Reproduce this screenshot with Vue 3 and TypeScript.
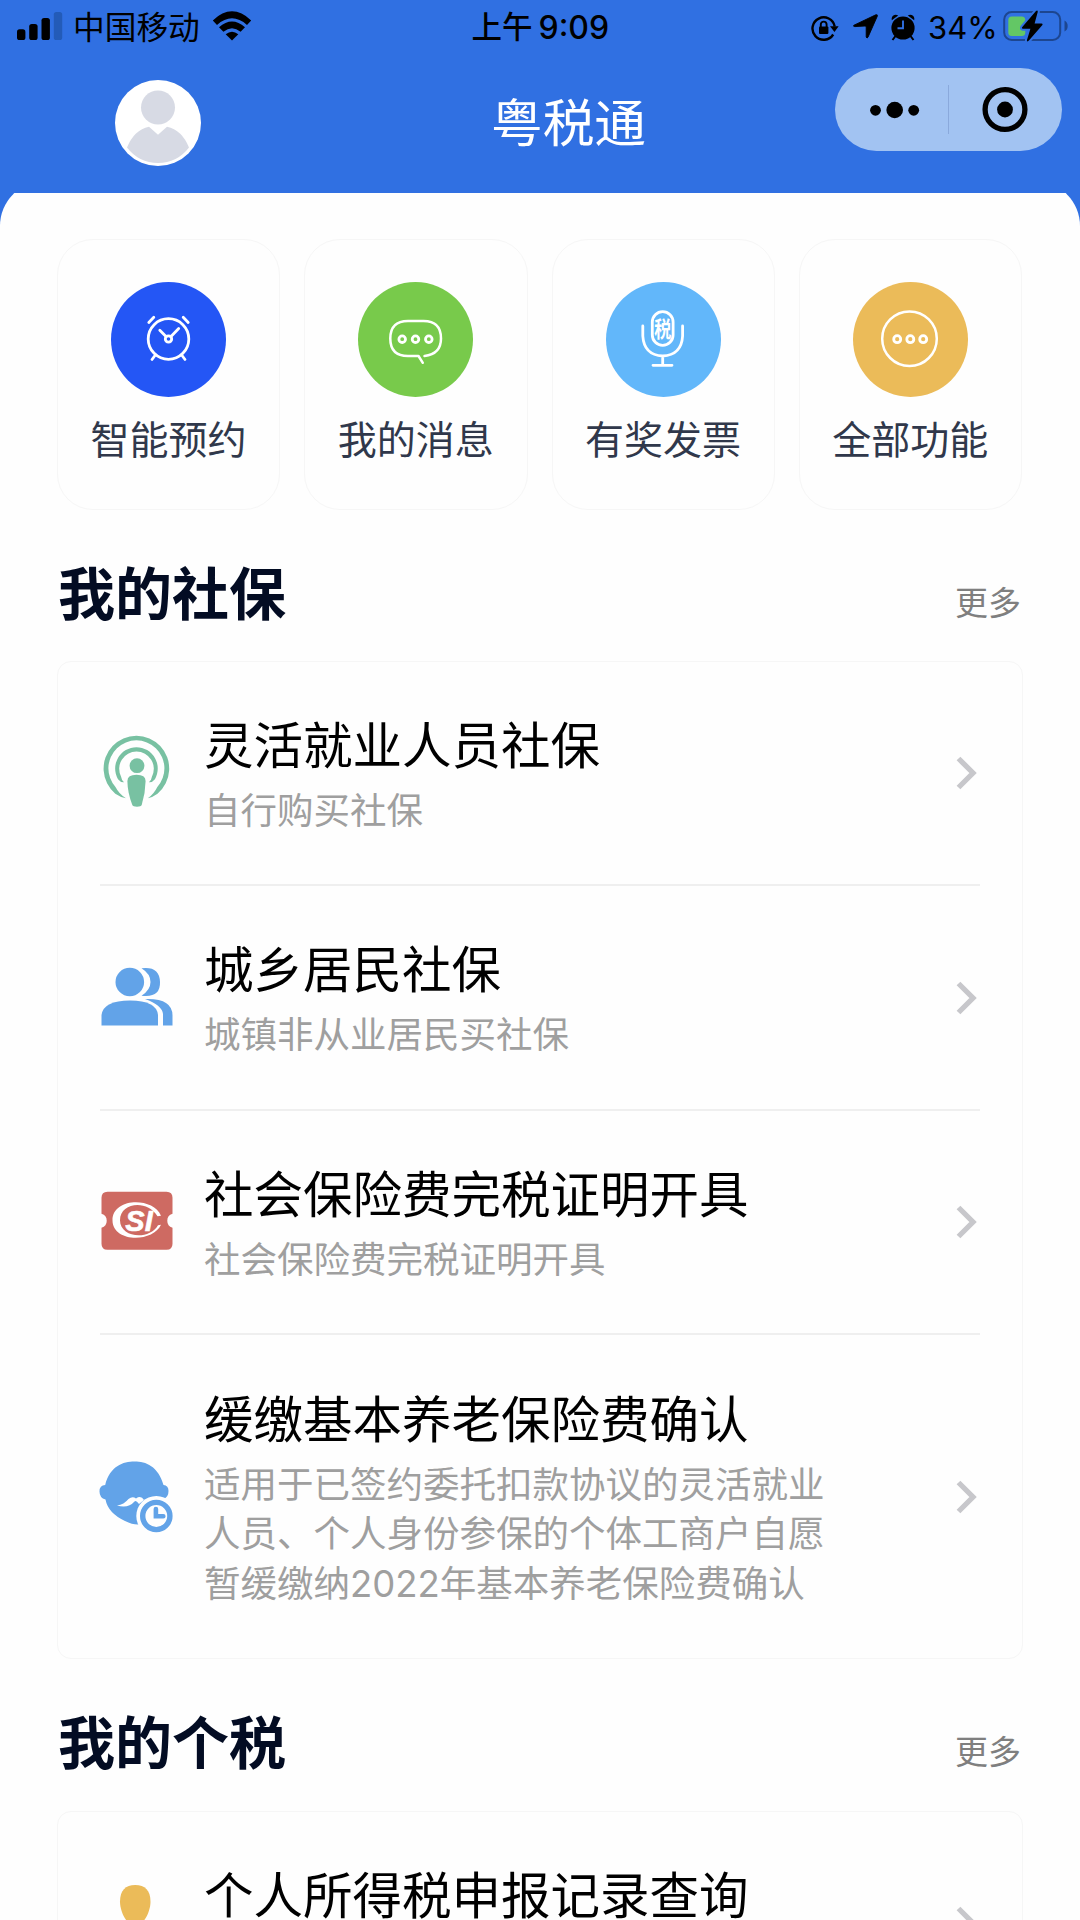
<script setup lang="ts">
type IconName = 'podcast' | 'people' | 'ticket' | 'elder' | 'bulb'

interface Shortcut {
  key: 'alarm' | 'message' | 'mic' | 'all'
  label: string
}

interface Service {
  icon: IconName
  title: string
  desc: string[]
}

interface Section {
  title: string
  items: Service[]
}

const shortcuts: Shortcut[] = [
  { key: 'alarm', label: '智能预约' },
  { key: 'message', label: '我的消息' },
  { key: 'mic', label: '有奖发票' },
  { key: 'all', label: '全部功能' },
]

const sections: Section[] = [
  {
    title: '我的社保',
    items: [
      { icon: 'podcast', title: '灵活就业人员社保', desc: ['自行购买社保'] },
      { icon: 'people', title: '城乡居民社保', desc: ['城镇非从业居民买社保'] },
      { icon: 'ticket', title: '社会保险费完税证明开具', desc: ['社会保险费完税证明开具'] },
      {
        icon: 'elder',
        title: '缓缴基本养老保险费确认',
        desc: [
          '适用于已签约委托扣款协议的灵活就业',
          '人员、个人身份参保的个体工商户自愿',
          '暂缓缴纳2022年基本养老保险费确认',
        ],
      },
    ],
  },
  {
    title: '我的个税',
    items: [{ icon: 'bulb', title: '个人所得税申报记录查询', desc: [''] }],
  },
]
</script>

<template>
  <div class="screen">
    <header class="header">
      <div class="status">
        <div class="status-left">
          <svg class="signal" width="46" height="28" viewBox="0 0 46 28">
            <rect x="0" y="17.3" width="8.4" height="10.7" rx="2.6" />
            <rect x="12.2" y="12" width="8.4" height="16" rx="2.6" />
            <rect x="24.5" y="6" width="8.4" height="22" rx="2.6" />
            <rect x="36.8" y="0" width="8.4" height="28" rx="2.6" fill="#235bb8" />
          </svg>
          <span class="carrier">中国移动</span>
          <svg class="wifi" width="40" height="30" viewBox="0 0 40 30">
            <path d="M0.8 9.4Q20 -8.8 39.2 9.4L35 13.9Q20 0.8 5 13.9Z" />
            <path d="M7 16.3Q20 4.6 33 16.3L28.6 20.8Q20 13.6 11.4 20.8Z" />
            <path d="M13.7 23.3Q20 18 26.3 23.3L20 29.6Z" />
          </svg>
        </div>
        <div class="clock"><span class="clock-cn">上午</span><span class="clock-num">9:09</span></div>
        <div class="status-right">
          <svg width="28" height="28" viewBox="0 0 28 28">
            <path d="M22.2 20.5A11.2 11.2 0 1 1 23.7 12.5" fill="none" stroke="#000" stroke-width="2.4" />
            <path d="M19 12.2h8.6L23.5 18Z" />
            <rect x="8" y="12.4" width="9.4" height="7.6" rx="1" />
            <path d="M9.8 13v-2.5a2.9 2.9 0 0 1 5.8 0V13" fill="none" stroke="#000" stroke-width="1.9" />
          </svg>
          <svg class="arrow" width="25" height="25" viewBox="0 0 25 25">
            <path d="M1 11.2 22.8 0.8Q24.8 0.2 24.3 2.2L15 23.2Q14 25 13.2 23V12.8Q13 12 12 12L1.8 12.6Q-.4 12.2 1 11.2Z" stroke="#000" stroke-width=".9" />
          </svg>
          <svg class="bell" width="24" height="27" viewBox="0 0 24 27">
            <circle cx="12" cy="14" r="11.6" />
            <path d="M.8 6.2Q0 2 3.4 .9Q5.5 .3 7.2 1.6ZM23.2 6.2Q24 2 20.6 .9Q18.5 .3 16.8 1.6Z" />
            <path d="m4.5 22-3 4M19.5 22l3 4" stroke="#000" stroke-width="2" />
            <path d="M12 6.5V14.2H6.5" fill="none" stroke="#3070e2" stroke-width="1.9" />
          </svg>
          <span class="percent">34%</span>
          <svg class="battery" width="65" height="32" viewBox="0 0 65 32">
            <rect x="1.2" y="2" width="56" height="28" rx="7.5" fill="none" stroke="#1d4690" stroke-width="2" />
            <path d="M61.5 10.5q3.2 1.5 3.2 5.5t-3.2 5.5Z" fill="#1d4690" />
            <rect x="5.3" y="6.5" width="17" height="19.5" rx="3.5" fill="#63c765" />
            <path d="M33 1 19.3 17q-1 1.5.7 1.7h7.4L23.9 30.2q.3 2.2 2 .4L39.2 15.3q1-1.5-.7-1.8H31.6L34.8 1.8Q34.6-.4 33 1Z" stroke="#3070e2" stroke-width="4" />
            <path d="M33 1 19.3 17q-1 1.5.7 1.7h7.4L23.9 30.2q.3 2.2 2 .4L39.2 15.3q1-1.5-.7-1.8H31.6L34.8 1.8Q34.6-.4 33 1Z" />
          </svg>
        </div>
      </div>
      <div class="nav">
        <svg class="avatar" width="86" height="86" viewBox="0 0 86 86">
          <circle cx="43" cy="43" r="43" fill="#fff" />
          <circle cx="43" cy="27.5" r="17" fill="#d7dae4" />
          <path d="M12 67.5Q19 50 34 46.7L43 54.7 52 46.7Q67 50 74 67.5Q62 83 43 83T12 67.5Z" fill="#d7dae4" />
        </svg>
        <h1 class="brand">粤税通</h1>
        <div class="capsule">
          <svg width="227" height="83" viewBox="0 0 227 83">
            <circle cx="40.5" cy="42.3" r="5.4" />
            <circle cx="59.7" cy="42" r="8.3" />
            <circle cx="78.7" cy="42.3" r="5.4" />
            <path d="M113.5 17v49" stroke="#8aa9dc" stroke-width="1" />
            <circle cx="170" cy="41.5" r="19.9" fill="none" stroke="#000" stroke-width="5.3" />
            <circle cx="170" cy="41.5" r="7.9" />
          </svg>
        </div>
      </div>
    </header>

    <div class="clip">
      <main class="panel">
        <nav class="shortcuts">
          <div v-for="s in shortcuts" :key="s.key" class="tile">
            <div class="disc" :class="s.key">
              <svg width="115" height="115" viewBox="0 0 115 115" fill="none" stroke="#fff" stroke-width="2.8" stroke-linecap="round" stroke-linejoin="round">
                <template v-if="s.key === 'alarm'">
                  <circle cx="57.5" cy="57" r="20.3" />
                  <circle cx="57.5" cy="57" r="3.2" />
                  <path d="M55 54.5 48.8 48.3M60 54.5 67.7 46.5M37.8 40.5l5-5.3M77.2 40.5l-5-5.3M44 73.5l-3 4M71 73.5l3 4" />
                </template>
                <template v-else-if="s.key === 'message'">
                  <path d="M66.500 74Q83 72 83 56.500Q83 39 65.500 39H50Q32.300 39 32.300 56.500T50 74H60.500L64.800 80.800" stroke-width="2.500" />
                  <circle cx="44.200" cy="57.200" r="3.300" />
                  <circle cx="57.500" cy="57.200" r="3.300" />
                  <circle cx="70.800" cy="57.200" r="3.300" />
                </template>
                <template v-else-if="s.key === 'mic'">
                  <rect x="46.300" y="29.700" width="20.800" height="33.600" rx="10.400" />
                  <path d="M36.800 44V54Q38 73 56.700 74Q75.500 73 76.600 54V44M56.700 74.500V83M47 83.300H66" />
                  <text class="tax" text-anchor="middle" fill="#fff" stroke="none" transform="translate(56.700 55) scale(1 1.280)">税</text>
                </template>
                <template v-else>
                  <circle cx="56.500" cy="56.700" r="27.300" stroke-width="2.500" />
                  <circle cx="44.200" cy="57.200" r="3.500" />
                  <circle cx="57.300" cy="57.200" r="3.500" />
                  <circle cx="70.200" cy="57.200" r="3.500" />
                </template>
              </svg>
            </div>
            <span class="tile-label">{{ s.label }}</span>
          </div>
        </nav>

        <section v-for="sec in sections" :key="sec.title" class="section">
          <div class="section-head">
            <h2>{{ sec.title }}</h2>
            <span class="more">更多</span>
          </div>
          <div class="card">
            <div v-for="item in sec.items" :key="item.title" class="row">
              <svg class="row-icon" width="80" height="80" viewBox="0 0 80 80">
                <g v-if="item.icon === 'podcast'" fill="#78c1a2">
                  <path d="M29 65.300Q23 64 18.300 60.700A32.800 32.800 0 1 1 60.500 60.700Q56 64 50.800 65.300Q57 61 60.300 54A28 28 0 1 0 18.500 54Q22 61 29 65.300Z" />
                  <path d="M27 49.300Q23.500 49.500 21 46.200A21.300 21.300 0 1 1 57.900 46.200Q55.500 49.500 51.900 49.300Q54.500 47 55 43.500A17.300 17.300 0 1 0 24 43.500Q24.500 47 27 49.300Z" />
                  <circle cx="40" cy="32.700" r="7.400" />
                  <path d="M30.400 48Q30.400 41.700 39.500 41.700T48.600 48Q48.400 60 44.700 72Q44 73.700 40 73.700T35.300 72Q30.600 60 30.400 48Z" />
                </g>
                <g v-else-if="item.icon === 'people'" fill="#62a3e8" transform="translate(0 -2)">
                  <circle cx="32.800" cy="26" r="14.300" />
                  <path d="M44.500 12.300Q62.500 10 63 26T44.500 39.700Q53.500 34 53.500 26T44.500 12.300Z" />
                  <path d="M4.500 69.500V59Q6.500 44.500 33 44.500T61 59V69.500Z" />
                  <path d="M48 43Q75.500 42 75.500 59.500V69.500H66V58Q65 49 48 43Z" />
                </g>
                <g v-else-if="item.icon === 'ticket'" transform="translate(0 -1.300)">
                  <path d="M10.500 11H69.500Q75.500 11 75.500 17V33A7.300 7.300 0 0 0 75.500 47V63Q75.500 69 69.500 69H10.500Q4.500 69 4.500 63V47A7.300 7.300 0 0 0 4.500 33V17Q4.500 11 10.500 11Z" fill="#ce6a62" />
                  <path d="M64 35C56 16 15.500 17 15.500 39.500S56 62 64 44L61 44.500C52 60 23 57 23 39.500S50 18.500 60.500 35.500Z" fill="#fff" />
                  <text class="si" x="42" y="50.300" text-anchor="middle" fill="#fff" stroke="#fff" stroke-width=".6">SI</text>
                </g>
                <g v-else-if="item.icon === 'elder'" fill="#62a3e8">
                  <path d="M8.200 28C13 9 26 4.500 37.500 4.500S61 9 66.500 28Q71.500 28.500 71.500 34T67 42L45 67Q38 69 28 64Q11 56 8.500 42.500Q2.500 41 2.500 34.500T8.200 28Z" />
                  <path d="M20 48.500Q27 47.500 31.500 42Q35.500 39 39 41.500Q44 38 47 43L42 47Q39 43 37.500 44.500Q31 52 20 48.500Z" fill="#fff" />
                  <circle cx="59.300" cy="59" r="20" fill="#fefefe" />
                  <circle cx="59.300" cy="59" r="13.600" fill="none" stroke="#62a3e8" stroke-width="5.400" />
                  <path d="M58.900 52V59.300H66.300" fill="none" stroke="#62a3e8" stroke-width="4.600" stroke-linecap="round" />
                </g>
                <g v-else fill="#ebbb59">
                  <path d="M38.200 2C48 2 53.500 7.500 53.500 18.500S46 43 38.200 43S23 29.500 23 18.500S28.500 2 38.200 2Z" />
                  <path d="M4 72Q6 48 38.500 48T73 72Z" />
                </g>
              </svg>
              <div class="row-text">
                <div class="row-title">{{ item.title }}</div>
                <div v-for="line in item.desc" :key="line" class="row-desc">{{ line }}</div>
              </div>
              <svg class="chevron" width="22" height="36" viewBox="0 0 22 36">
                <path d="M2.500 3.500 17 18 2.500 32.500" fill="none" stroke="#c7c7cb" stroke-width="5.300" />
              </svg>
            </div>
          </div>
        </section>
      </main>
    </div>
  </div>
</template>

<style>
body {
  margin: 0;
  overflow: hidden;
}
</style>

<style scoped>
.screen {
  width: 1080px;
  height: 1920px;
  overflow: hidden;
  background: #3070e2;
  font-family: "Noto Sans CJK SC", sans-serif;
  color: #000;
}
svg {
  display: block;
  flex: none;
}
.header {
  height: 193px;
}
.status {
  display: flex;
  justify-content: space-between;
  height: 54px;
  padding: 0 12px 0 17px;
  box-sizing: border-box;
}
.status-left,
.status-right {
  display: flex;
  width: 452px;
}
.signal {
  margin-top: 12px;
}
.carrier {
  margin-left: 10px;
  font-size: 31.7px;
  line-height: 50px;
  width: 127px;
  white-space: nowrap;
}
.wifi {
  margin: 11px 0 0 11.5px;
}
.clock {
  display: flex;
  width: 142px;
  line-height: 50px;
  font-size: 30.5px;
  font-weight: 500;
  white-space: nowrap;
}
.clock-num {
  margin-left: 6px;
  font-family: Inter, sans-serif;
  font-size: 32px;
  line-height: 55px;
}
.status-right {
  justify-content: flex-end;
}
.status-right > svg:first-child {
  margin-top: 14px;
}
.arrow {
  margin: 14px 0 0 14px;
}
.bell {
  margin: 14px 0 0 13px;
}
.percent {
  margin-left: 13px;
  width: 66px;
  font-family: Inter, sans-serif;
  font-size: 31px;
  line-height: 55px;
}
.battery {
  margin: 10px 0 0 9px;
}
.nav {
  display: flex;
  align-items: flex-start;
  height: 139px;
}
.avatar {
  margin: 26px 0 0 115px;
}
.brand {
  margin: 26px 0 0 290px;
  width: 344px;
  font-size: 51.7px;
  font-weight: 400;
  line-height: 80px;
  color: #fff;
}
.capsule {
  margin-top: 14px;
  width: 227px;
  height: 83px;
  border-radius: 42px;
  background: #a2c3f2;
}
.clip {
  display: flex;
  flex-direction: column;
  height: 1727px;
  overflow: hidden;
}
.panel {
  margin-top: -12px;
  min-height: 1800px;
  padding: 58px 57px 0;
  border-radius: 45px 45px 0 0;
  background: #fefefe;
}
.shortcuts {
  display: flex;
  gap: 24px;
  margin-right: 1px;
}
.tile {
  flex: 1;
  display: flex;
  flex-direction: column;
  align-items: center;
  height: 270.5px;
  padding-top: 41.5px;
  box-sizing: border-box;
  border: 1.5px solid #f6f6f6;
  border-radius: 36px;
}
.disc {
  width: 115px;
  height: 115px;
  border-radius: 50%;
}
.alarm { background: #2456f5; }
.message { background: #78ca4b; }
.mic { background: #62b7fa; }
.all { background: #ebbb59; }
.tax {
  font-size: 17px;
  font-weight: 700;
}
.tile-label {
  margin-top: 11.5px;
  font-size: 39px;
  line-height: 58px;
  color: #30384b;
}
.section-head {
  display: flex;
  justify-content: space-between;
  height: 151.5px;
}
h2 {
  margin: 40px 0 0 1px;
  font-size: 57px;
  font-weight: 700;
  line-height: 80px;
  color: #030c23;
}
.more {
  margin: 68px 2px 0 0;
  font-size: 33px;
  line-height: 46px;
  color: #7f7f7f;
}
.card {
  padding: 0 42px;
  border: 1.5px solid #f6f6f6;
  border-radius: 14px;
}
.row {
  display: flex;
  align-items: center;
  height: 222.4px;
  border-bottom: 2px solid #efefef;
}
.row:last-child {
  border-bottom: 0;
}
.row:nth-child(4) {
  height: 323px;
}
.row-icon {
  margin-left: -3px;
}
.row-text {
  margin-left: 27px;
  flex: 1;
  white-space: nowrap;
}
.row-title {
  margin-top: -5px;
  padding-bottom: 6px;
  font-size: 49.5px;
  line-height: 76px;
}
.row-desc {
  min-height: 49.5px;
  font-family: Inter, "Noto Sans CJK SC", sans-serif;
  font-size: 36.5px;
  line-height: 49.5px;
  color: #9f9f9f;
}
.chevron {
  margin-right: 2px;
}
.si {
  font-family: "Liberation Sans", sans-serif;
  font-size: 29px;
  font-weight: 700;
  font-style: italic;
}
</style>
